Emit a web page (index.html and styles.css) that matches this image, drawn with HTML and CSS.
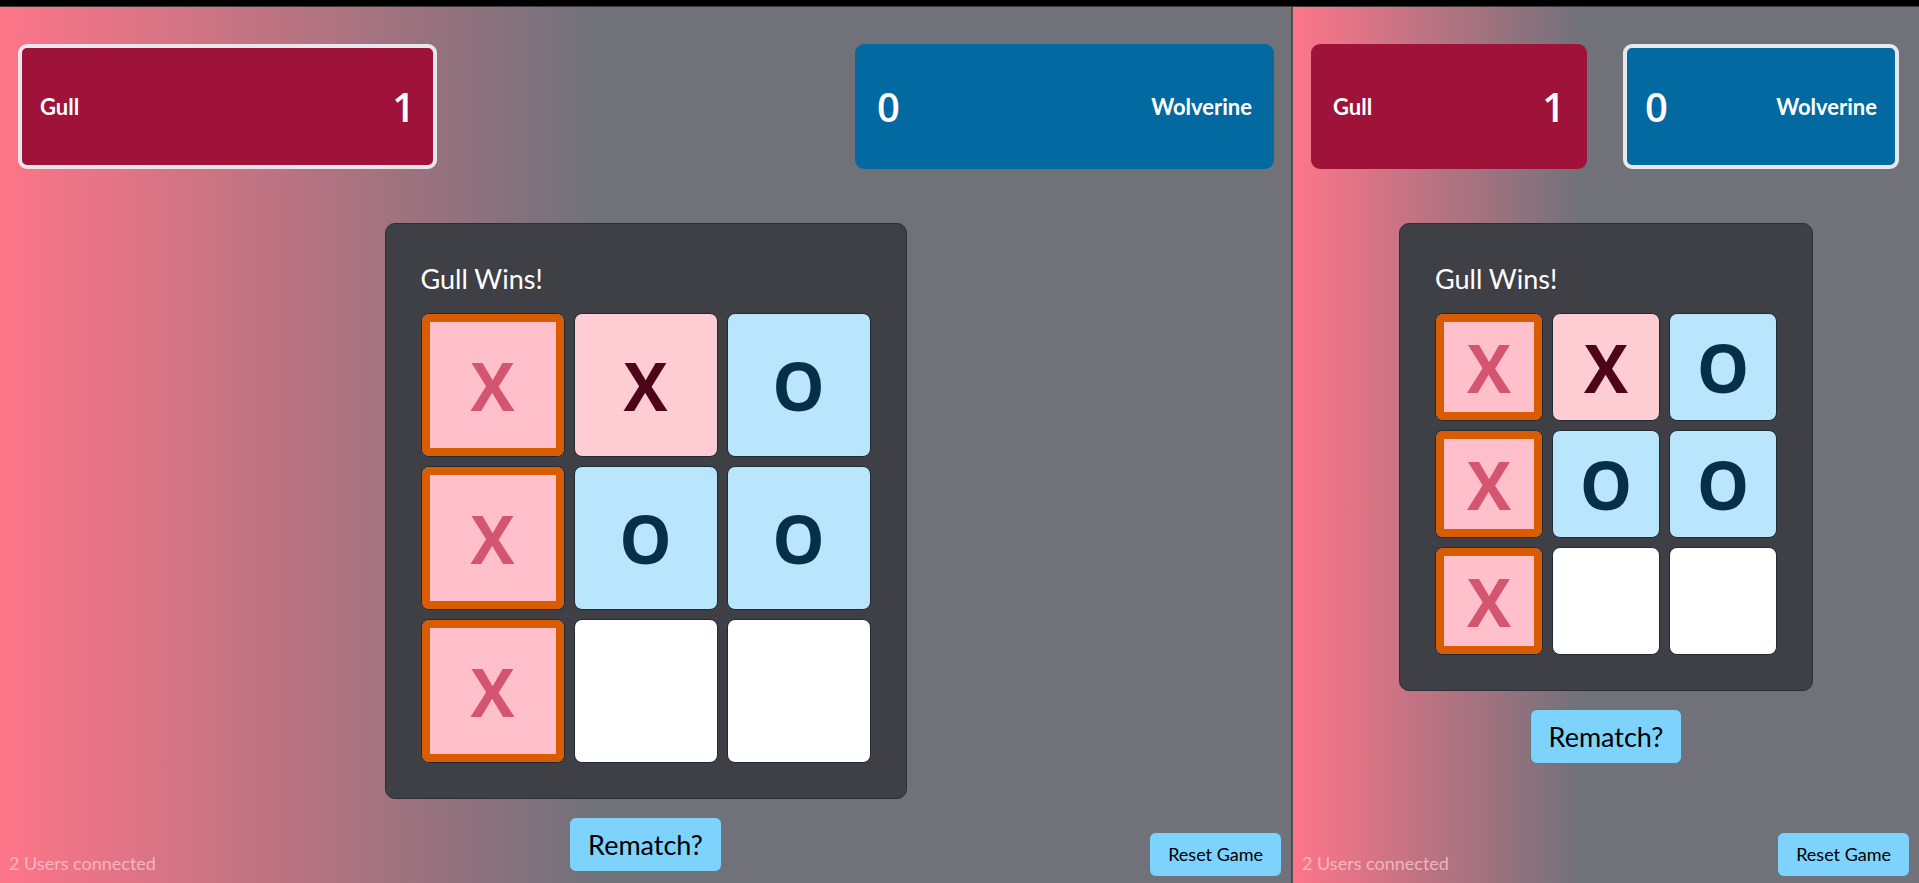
FILE: index.html
```html
<!DOCTYPE html>
<html lang="en">
<head>
<meta charset="utf-8">
<title>Tic Tac Toe</title>
<link rel="stylesheet" href="styles.css">
</head>
<body>
<div class="topbar"></div>
<div class="screens">
  <section class="panel panel-wide">
    <header class="scores">
      <div class="score score-x active"><span class="name">Gull</span><span class="points">1</span></div>
      <div class="score score-o"><span class="points">0</span><span class="name">Wolverine</span></div>
    </header>
    <main class="game">
      <div class="board-card">
        <h2 class="status">Gull Wins!</h2>
        <div class="board">
          <div class="cell x win">X</div>
          <div class="cell x">X</div>
          <div class="cell o">O</div>
          <div class="cell x win">X</div>
          <div class="cell o">O</div>
          <div class="cell o">O</div>
          <div class="cell x win">X</div>
          <div class="cell empty"></div>
          <div class="cell empty"></div>
        </div>
      </div>
      <button class="btn rematch">Rematch?</button>
    </main>
    <p class="users">2 Users connected</p>
    <button class="btn reset">Reset Game</button>
  </section>
  <div class="divider"></div>
  <section class="panel panel-narrow">
    <header class="scores">
      <div class="score score-x"><span class="name">Gull</span><span class="points">1</span></div>
      <div class="score score-o active"><span class="points">0</span><span class="name">Wolverine</span></div>
    </header>
    <main class="game">
      <div class="board-card">
        <h2 class="status">Gull Wins!</h2>
        <div class="board">
          <div class="cell x win">X</div>
          <div class="cell x">X</div>
          <div class="cell o">O</div>
          <div class="cell x win">X</div>
          <div class="cell o">O</div>
          <div class="cell o">O</div>
          <div class="cell x win">X</div>
          <div class="cell empty"></div>
          <div class="cell empty"></div>
        </div>
      </div>
      <button class="btn rematch">Rematch?</button>
    </main>
    <p class="users">2 Users connected</p>
    <button class="btn reset">Reset Game</button>
  </section>
</div>
</body>
</html>
```

FILE: styles.css
```css
* { box-sizing: border-box; }

html, body {
  margin: 0;
  padding: 0;
  height: 100%;
  overflow: hidden;
}

body {
  background: #000;
  font-family: "Lato", "Open Sans", sans-serif;
  font-size: 18px;
  color: #fff;
}

.topbar {
  height: 7px;
  background: #000;
  border-bottom: 1px solid #3c3c3c;
}

.screens {
  display: flex;
  height: 876px;
}

.divider {
  width: 2px;
  background: #4e4e4e;
}

.panel {
  position: relative;
  display: flex;
  flex-direction: column;
  padding-top: 37px;
  background: linear-gradient(to right, #fe7589 0%, #71717a 46%, #71717a 100%);
  overflow: hidden;
}

.panel-wide { width: 1291px; }
.panel-narrow { flex: 1; }

.scores {
  display: flex;
  justify-content: space-between;
  padding: 0 17px 0 18px;
}

.panel-narrow .scores { padding: 0 20px 0 18px; }

.score {
  display: flex;
  align-items: center;
  justify-content: space-between;
  height: 125px;
  width: 419px;
  padding: 0 18px;
  border: 4px solid transparent;
  border-radius: 9px;
}

.panel-narrow .score { width: 276px; }

.score.active { border-color: #e8e8ec; }

.score-x { background: #9f1239; }
.score-o { background: #0369a1; }

.name {
  font-size: 22px;
  font-weight: 700;
}

.points {
  font-family: "Open Sans", "Lato", sans-serif;
  font-size: 40px;
  font-weight: 600;
  line-height: 1;
}

.game {
  display: flex;
  flex-direction: column;
  align-items: center;
  gap: 18px;
  margin-top: 54px;
}

.board-card {
  background: #3f3f46;
  border: 1px solid #2a2f3a;
  border-radius: 10px;
  padding: 35px;
}

.status {
  margin: 0 0 15px;
  font-size: 27px;
  font-weight: 400;
  line-height: 39px;
  color: #fff;
}

.board {
  display: grid;
  grid-template-columns: repeat(3, 144px);
  grid-auto-rows: 144px;
  gap: 9px;
}

.panel-narrow .board {
  grid-template-columns: repeat(3, 108px);
  grid-auto-rows: 108px;
}

.cell {
  display: flex;
  align-items: center;
  justify-content: center;
  border: 1px solid #1f2a37;
  border-radius: 8px;
  font-family: "Open Sans", "Lato", sans-serif;
  font-size: 66px;
  font-weight: 700;
  line-height: 1;
}

.cell.x { background: #fecdd3; color: #4c0519; }
.cell.o { background: #bae6fd; color: #082f49; }
.cell.empty { background: #fff; }

.cell.win {
  background: #ffc0cb;
  color: #d45570;
  box-shadow: inset 0 0 0 8px #da5c00;
}

.btn {
  font-family: "Lato", "Open Sans", sans-serif;
  background: #7dd3fc;
  color: #000;
  border: 1px solid #6b7280;
  border-radius: 7px;
  cursor: pointer;
}

.rematch {
  font-size: 27px;
  line-height: 37px;
  padding: 8px 18px;
}

.users {
  position: absolute;
  left: 9px;
  bottom: 9px;
  margin: 0;
  font-size: 18px;
  line-height: 22px;
  color: rgba(254, 205, 211, 0.75);
}

.reset {
  position: absolute;
  right: 9px;
  bottom: 6px;
  font-size: 18px;
  line-height: 25px;
  padding: 9px 18px;
}
```
